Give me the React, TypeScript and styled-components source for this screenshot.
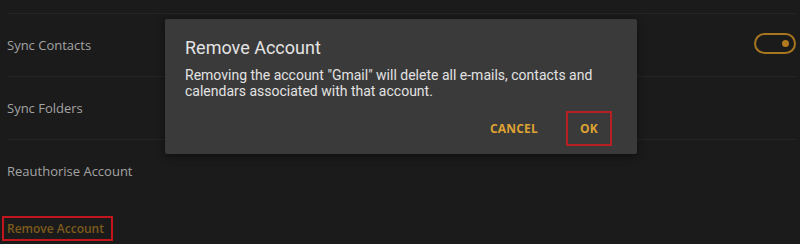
import styled, { createGlobalStyle } from "styled-components";

const GlobalStyle = createGlobalStyle`
  html, body {
    margin: 0;
    padding: 0;
    background: #1b1b1b;
  }
  body {
    font-family: "Open Sans", "Noto Sans", sans-serif;
  }
`;

const rows = [
  { label: "Sync Contacts", toggle: true },
  { label: "Sync Folders" },
  { label: "Reauthorise Account" },
  { label: "Remove Account", danger: true },
];

export default function App() {
  return (
    <>
      <GlobalStyle />
      <Screen>
        <SettingsList>
          {rows.map((row) => (
            <Row key={row.label}>
              <RowLabel $highlight={row.danger}>{row.label}</RowLabel>
              {row.toggle && (
                <Toggle>
                  <Knob />
                </Toggle>
              )}
            </Row>
          ))}
        </SettingsList>

        <Dialog>
          <DialogTitle>Remove Account</DialogTitle>
          <DialogBody>
            Removing the account "Gmail" will delete all e-mails, contacts and
            calendars associated with that account.
          </DialogBody>
          <DialogActions>
            <ActionButton>CANCEL</ActionButton>
            <ActionButton $outlined>OK</ActionButton>
          </DialogActions>
        </Dialog>
      </Screen>
    </>
  );
}

const Screen = styled.div`
  position: relative;
  width: 800px;
  height: 244px;
  overflow: hidden;
  background: #1b1b1b;
`;

const SettingsList = styled.div`
  display: flex;
  flex-direction: column;
  padding: 13px 4px 0 8px;
`;

const Row = styled.div`
  display: flex;
  align-items: center;
  justify-content: space-between;
  height: 62px;
  border-top: 1px solid #252525;
  &:last-child {
    border-top-color: transparent;
  }
`;

const RowLabel = styled.div<{ $highlight?: boolean }>`
  font-size: 13px;
  margin-left: -1px;
  color: ${({ $highlight }) => ($highlight ? "#7d5a1c" : "#a3a3a3")};
  font-weight: ${({ $highlight }) => ($highlight ? 600 : 400)};
  ${({ $highlight }) =>
    $highlight &&
    `
    font-size: 12px;
    margin-left: -6px;
    margin-top: -11px;
    padding: 2px 7px 2px 3px;
    border: 2px solid #c3161c;
  `}
`;

const Toggle = styled.div`
  box-sizing: border-box;
  width: 42px;
  height: 21px;
  border: 2px solid #a8761e;
  border-radius: 11px;
  display: flex;
  align-items: center;
  justify-content: flex-end;
  padding-right: 5px;
  margin-top: -4px;
`;

const Knob = styled.div`
  width: 7px;
  height: 7px;
  border-radius: 50%;
  background: #b17a1e;
`;

const Dialog = styled.div`
  position: absolute;
  left: 165px;
  top: 19px;
  width: 472px;
  height: 135px;
  box-sizing: border-box;
  background: #3a3a3a;
  border-radius: 2px;
  box-shadow: 0 2px 8px rgba(0, 0, 0, 0.5);
  padding: 18px 20px 0 20px;
  font-family: Roboto, "Noto Sans", sans-serif;
`;

const DialogTitle = styled.div`
  font-size: 18px;
  color: #e4e4e4;
  line-height: 22px;
`;

const DialogBody = styled.div`
  margin-top: 8px;
  font-size: 14px;
  line-height: 16px;
  color: #e2e2e2;
  width: 420px;
`;

const DialogActions = styled.div`
  display: flex;
  justify-content: flex-end;
  align-items: center;
  gap: 28px;
  margin-top: 12px;
  margin-right: 5px;
`;

const ActionButton = styled.div<{ $outlined?: boolean }>`
  font-family: "Open Sans", "Noto Sans", sans-serif;
  font-size: 12px;
  font-weight: 700;
  color: #dfa233;
  letter-spacing: 0.2px;
  box-sizing: border-box;
  height: 35px;
  display: flex;
  align-items: center;
  justify-content: center;
  ${({ $outlined }) =>
    $outlined &&
    `
    width: 46px;
    border: 2px solid #b81f22;
  `}
`;
